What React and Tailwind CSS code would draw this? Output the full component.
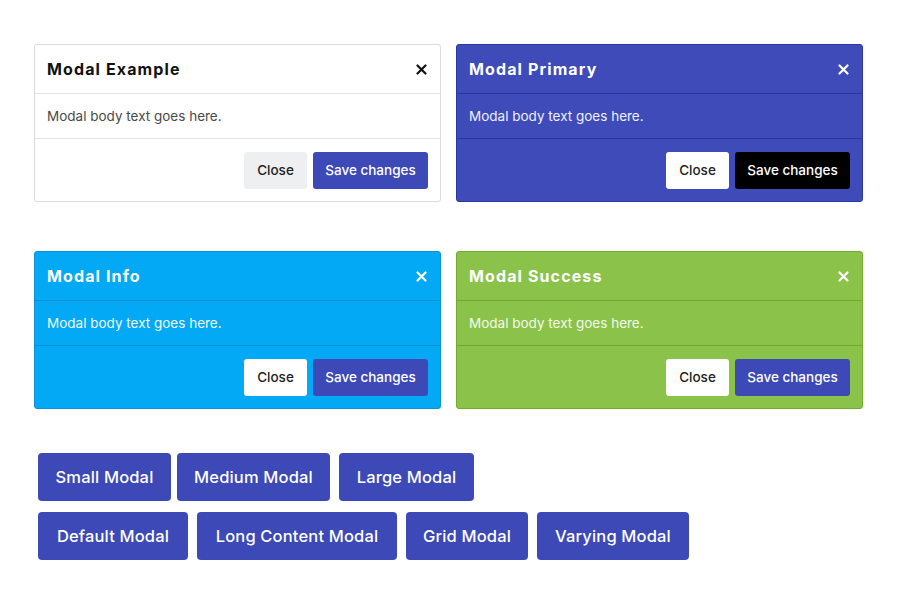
import React from 'react';

const variants = {
  default: {
    card: 'bg-white border-[#dcdcdc] text-[#111]',
    line: 'border-[#e2e2e2]',
    body: 'text-[#4a4a4a]',
    close: 'bg-[#eeeff1] text-[#222]',
    save: 'bg-[#3d49b6] text-white',
  },
  primary: {
    card: 'bg-[#3e4bb8] border-[#2b37a0] text-white',
    line: 'border-[#2a37a1]',
    body: 'text-[#eef0ff]',
    close: 'bg-white text-[#222]',
    save: 'bg-black text-white',
  },
  info: {
    card: 'bg-[#03a9f4] border-[#0b93d6] text-white',
    line: 'border-[#0a8fd0]',
    body: 'text-[#effaff]',
    close: 'bg-white text-[#222]',
    save: 'bg-[#3d49b6] text-white',
  },
  success: {
    card: 'bg-[#8bc34a] border-[#72ad2f] text-white',
    line: 'border-[#6eab2c]',
    body: 'text-[#f3faeb]',
    close: 'bg-white text-[#222]',
    save: 'bg-[#3d49b6] text-white',
  },
};

function CloseIcon() {
  return (
    <svg width="11" height="11" viewBox="0 0 11 11" fill="none" stroke="currentColor" strokeWidth="2.2" strokeLinecap="round">
      <path d="M1.5 1.5l8 8M9.5 1.5l-8 8" />
    </svg>
  );
}

function ModalCard({ title, variant }) {
  const v = variants[variant];
  return (
    <div className={`w-[407px] border rounded-[3px] ${v.card}`}>
      <div className={`h-[49px] flex items-center justify-between pl-[12px] pr-[13px] border-b ${v.line}`}>
        <h3 className="text-[16px] font-bold tracking-[0.07em]">{title}</h3>
        <CloseIcon />
      </div>
      <div className={`h-[45px] flex items-center px-[12px] text-[13.5px] border-b ${v.line} ${v.body}`}>
        Modal body text goes here.
      </div>
      <div className="h-[62px] flex items-center justify-end gap-[6px] pr-[12px]">
        <button className={`h-[37px] w-[63px] rounded-[3px] text-[13.5px] font-medium ${v.close}`}>Close</button>
        <button className={`h-[37px] w-[115px] rounded-[3px] text-[13.5px] font-medium ${v.save}`}>Save changes</button>
      </div>
    </div>
  );
}

function BigButton({ children, w }) {
  return (
    <button className={`h-[48px] ${w} rounded-[4px] bg-[#3d49b6] text-white text-[16.5px] font-medium tracking-[0.01em]`}>
      {children}
    </button>
  );
}

export default function App() {
  return (
    <div className="w-[900px] h-[600px] bg-white overflow-hidden" style={{ fontFamily: 'Inter, "Noto Sans", sans-serif' }}>
      <div className="pt-[44px] pl-[34px]">
        <div className="grid grid-cols-[407px_407px] gap-x-[15px] gap-y-[49px]">
          <ModalCard title="Modal Example" variant="default" />
          <ModalCard title="Modal Primary" variant="primary" />
          <ModalCard title="Modal Info" variant="info" />
          <ModalCard title="Modal Success" variant="success" />
        </div>
        <div className="mt-[44px] pl-[4px] flex flex-col gap-[11px]">
          <div className="flex gap-[6px]">
            <BigButton w="w-[133px]">Small Modal</BigButton>
            <BigButton w="w-[153px]">Medium Modal</BigButton>
            <BigButton w="w-[135px] ml-[3px]">Large Modal</BigButton>
          </div>
          <div className="flex gap-[9px]">
            <BigButton w="w-[150px]">Default Modal</BigButton>
            <BigButton w="w-[200px]">Long Content Modal</BigButton>
            <BigButton w="w-[122px]">Grid Modal</BigButton>
            <BigButton w="w-[152px]">Varying Modal</BigButton>
          </div>
        </div>
      </div>
    </div>
  );
}
